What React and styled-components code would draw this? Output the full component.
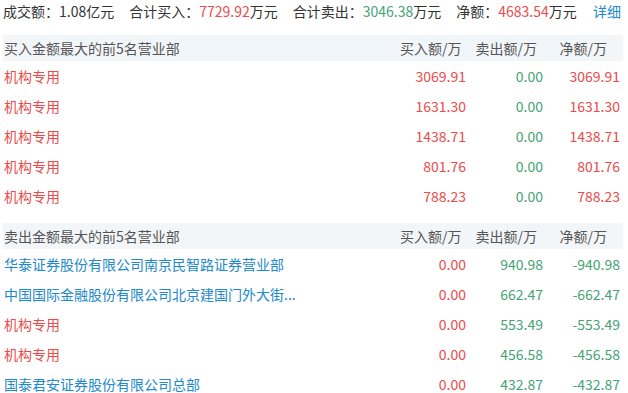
import React from "react";
import styled, { createGlobalStyle } from "styled-components";

const GlobalStyle = createGlobalStyle`
  body {
    margin: 0;
    background: #fff;
    font-family: "Noto Sans CJK SC", "Noto Sans", sans-serif;
    font-size: 14px;
    color: #333;
  }
`;

const RED = "#ea4b4b";
const GREEN = "#45a375";
const BLUE = "#2289cc";

const Page = styled.div`
  width: 628px;
  height: 393px;
  overflow: hidden;
  padding: 0 5px 0 3px;
  box-sizing: border-box;
`;

const Summary = styled.div`
  display: flex;
  align-items: center;
  height: 22px;
  line-height: 22px;
  margin-bottom: 13px;
  gap: 15px;
  white-space: nowrap;
`;

const Stat = styled.span`
  color: #333;
`;

const Num = styled.span`
  color: ${(p) => p.color};
`;

const More = styled.a`
  margin-left: auto;
  margin-right: 2px;
  color: ${BLUE};
  text-decoration: none;
`;

const Table = styled.div`
  display: grid;
  grid-template-columns: 1fr 70px 77px 76px;
  margin-bottom: 12px;
`;

const Head = styled.div`
  height: 26px;
  line-height: 26px;
  background: #f3f6f9;
  color: #555;
  white-space: nowrap;
  text-align: ${(p) => (p.$right ? "right" : "left")};
  padding-left: ${(p) => (p.$right ? 0 : 1)}px;
  padding-right: ${(p) => p.$pr || 0}px;
`;

const Cell = styled.div`
  height: 30px;
  line-height: 30px;
  white-space: nowrap;
  overflow: hidden;
  color: ${(p) => p.color || "#333"};
  text-align: ${(p) => (p.$right ? "right" : "left")};
  padding-left: ${(p) => (p.$right ? 0 : 1)}px;
  padding-right: ${(p) => p.$pr || 0}px;
`;

const buyRows = [
  ["机构专用", "3069.91", "0.00", "3069.91"],
  ["机构专用", "1631.30", "0.00", "1631.30"],
  ["机构专用", "1438.71", "0.00", "1438.71"],
  ["机构专用", "801.76", "0.00", "801.76"],
  ["机构专用", "788.23", "0.00", "788.23"],
];

const sellRows = [
  ["华泰证券股份有限公司南京民智路证券营业部", "0.00", "940.98", "-940.98", true],
  ["中国国际金融股份有限公司北京建国门外大街...", "0.00", "662.47", "-662.47", true],
  ["机构专用", "0.00", "553.49", "-553.49", false],
  ["机构专用", "0.00", "456.58", "-456.58", false],
  ["国泰君安证券股份有限公司总部", "0.00", "432.87", "-432.87", true],
];

function Section({ title, rows }) {
  return (
    <Table>
      <Head>{title}</Head>
      <Head $right $pr={9}>买入额/万</Head>
      <Head $right $pr={10}>卖出额/万</Head>
      <Head $right $pr={16}>净额/万</Head>
      {rows.map((r, i) => {
        const net = r[3].startsWith("-") ? GREEN : RED;
        return (
          <React.Fragment key={i}>
            <Cell color={r[4] ? BLUE : RED}>{r[0]}</Cell>
            <Cell $right $pr={4} color={RED}>{r[1]}</Cell>
            <Cell $right $pr={4} color={GREEN}>{r[2]}</Cell>
            <Cell $right $pr={3} color={net}>{r[3]}</Cell>
          </React.Fragment>
        );
      })}
    </Table>
  );
}

export default function App() {
  return (
    <Page>
      <GlobalStyle />
      <Summary>
        <Stat>成交额：1.08亿元</Stat>
        <Stat>
          合计买入：<Num color={RED}>7729.92</Num>万元
        </Stat>
        <Stat>
          合计卖出：<Num color={GREEN}>3046.38</Num>万元
        </Stat>
        <Stat>
          净额：<Num color={RED}>4683.54</Num>万元
        </Stat>
        <More href="#">详细</More>
      </Summary>
      <Section title="买入金额最大的前5名营业部" rows={buyRows} />
      <Section title="卖出金额最大的前5名营业部" rows={sellRows} />
    </Page>
  );
}
